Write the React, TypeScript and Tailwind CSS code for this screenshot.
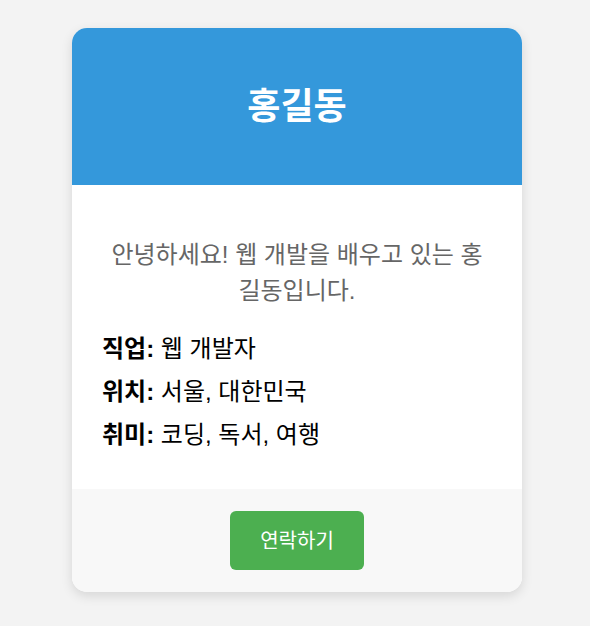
export default function App() {
    return (
        <div
            className="min-h-screen w-full bg-[#f3f3f3] pl-[4px] pt-[28px]"
            style={{ fontFamily: '"Liberation Sans", "Noto Sans CJK KR", sans-serif' }}
        >
            <div className="mx-auto w-[450px] overflow-hidden rounded-[15px] bg-white shadow-[0_4px_12px_rgba(0,0,0,0.12)]">
                {/* header */}
                <div className="flex h-[157px] items-center justify-center bg-[#3498db]">
                    <h1 className="text-[36px] font-bold text-white">홍길동</h1>
                </div>

                {/* body */}
                <div className="h-[304px] px-[30px] pt-[52px]">
                    <p className="mx-[5px] text-center text-[24px] leading-[36px] text-[#666]">
                        안녕하세요! 웹 개발을 배우고 있는 홍길동입니다.
                    </p>
                    <div className="mt-[18px] text-[24px] text-black">
                        <p className="leading-[43px]"><strong>직업:</strong> 웹 개발자</p>
                        <p className="leading-[43px]"><strong>위치:</strong> 서울, 대한민국</p>
                        <p className="leading-[43px]"><strong>취미:</strong> 코딩, 독서, 여행</p>
                    </div>
                </div>

                {/* footer */}
                <div className="flex h-[103px] items-center justify-center bg-[#f8f8f8]">
                    <button className="h-[59px] rounded-[6px] bg-[#4caf50] px-[30px] text-[20px] text-white">
                        연락하기
                    </button>
                </div>
            </div>
        </div>
    );
}
